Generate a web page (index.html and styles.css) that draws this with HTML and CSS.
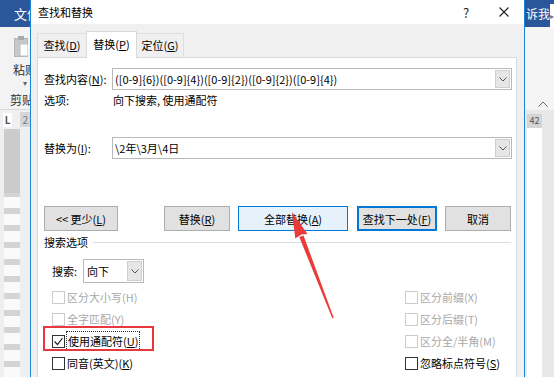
FILE: index.html
```html
<!DOCTYPE html>
<html lang="zh-CN">
<head>
  <meta charset="UTF-8" />
  <title>查找和替换</title>
  <link rel="stylesheet" href="styles.css">
</head>
<body>
  <div class="screen">
    <!-- Word window, left edge -->
    <div class="word-left">
      <div class="wl-tab">文件</div>
      <div class="wl-ribbon">
        <svg class="clip-icon" width="14" height="22" viewBox="0 0 14 22">
          <rect x="0.5" y="3.5" width="13" height="18" fill="#c9c9c9" stroke="#b5b5b5"/>
          <rect x="4" y="1" width="6" height="4" fill="#a9a9a9"/>
          <rect x="6" y="9" width="8" height="12" fill="#fff" stroke="#bdbdbd"/>
        </svg>
        <div class="wl-paste">粘贴</div>
        <div class="wl-caret">▾</div>
        <div class="wl-group">剪贴</div>
      </div>
      <div class="wl-corner"><span class="wl-l">L</span><span class="wl-num">2</span></div>
      <div class="wl-body"><div class="wl-ruler"></div></div>
    </div>

    <!-- Find and replace dialog -->
    <div class="dialog">
      <div class="titlebar">
        <span class="title">查找和替换</span>
        <span class="help">?</span>
        <svg class="close" width="10" height="10" viewBox="0 0 10 10">
          <path d="M0.5 0.5 L9.5 9.5 M9.5 0.5 L0.5 9.5" stroke="#222" stroke-width="1.1"/>
        </svg>
      </div>

      <div class="tabs">
        <div class="tab" style="width:50px">查找(<u>D</u>)</div>
        <div class="tab active" style="width:51px">替换(<u>P</u>)</div>
        <div class="tab" style="width:48px">定位(<u>G</u>)</div>
      </div>

      <div class="panel">
        <div class="field-row">
          <span>查找内容(<u>N</u>):</span>
          <div class="combo">
            <span class="combo-text">([0-9]{6})([0-9]{4})([0-9]{2})([0-9]{2})([0-9]{4})</span>
            <span class="combo-btn"><svg width="8" height="5" viewBox="0 0 8 5"><polyline points="0.5,0.5 4,4 7.5,0.5" fill="none" stroke="#555"/></svg></span>
          </div>
        </div>
        <div class="field-row options-row">
          <span>选项:</span>
          <span class="options-text">向下搜索, 使用通配符</span>
        </div>
        <div class="field-row replace-row">
          <span>替换为(<u>I</u>):</span>
          <div class="combo">
            <span class="combo-text">\2年\3月\4日</span>
            <span class="combo-btn"><svg width="8" height="5" viewBox="0 0 8 5"><polyline points="0.5,0.5 4,4 7.5,0.5" fill="none" stroke="#555"/></svg></span>
          </div>
        </div>

        <div class="buttons">
          <button class="btn btn-less">&lt;&lt; 更少(<u>L</u>)</button>
          <button class="btn btn-replace">替换(<u>R</u>)</button>
          <button class="btn btn-all">全部替换(<u>A</u>)</button>
          <button class="btn btn-next">查找下一处(<u>F</u>)</button>
          <button class="btn btn-cancel">取消</button>
        </div>

        <div class="group-title">搜索选项</div>

        <div class="search-row">
          <span class="search-label">搜索:</span>
          <div class="select">
            <span class="select-text">向下</span>
            <span class="combo-btn"><svg width="8" height="5" viewBox="0 0 8 5"><polyline points="0.5,0.5 4,4 7.5,0.5" fill="none" stroke="#555"/></svg></span>
          </div>
        </div>

        <div class="checks">
          <div class="check disabled"><span class="box"></span>区分大小写(H)</div>
          <div class="check disabled"><span class="box"></span>区分前缀(X)</div>
          <div class="check disabled"><span class="box"></span>全字匹配(Y)</div>
          <div class="check disabled"><span class="box"></span>区分后缀(T)</div>
          <div class="check"><span class="box"><svg width="11" height="11" viewBox="0 0 11 11"><polyline points="1.5,5.5 4.5,8.5 9.5,2" fill="none" stroke="#222" stroke-width="1.2"/></svg></span><span class="focus">使用通配符(<u>U</u>)</span></div>
          <div class="check disabled"><span class="box"></span>区分全/半角(M)</div>
          <div class="check"><span class="box"></span>同音(英文)(<u>K</u>)</div>
          <div class="check"><span class="box"></span>忽略标点符号(<u>S</u>)</div>
        </div>
      </div>
    </div>

    <!-- Word window, right edge -->
    <div class="word-right">
      <div class="wr-tab"><span class="wr-text">诉我</span><span class="wr-more">▸</span></div>
      <div class="wr-ribbon"><svg width="10" height="6" viewBox="0 0 10 6"><polyline points="0.5,5.5 5,1 9.5,5.5" fill="none" stroke="#666"/></svg></div>
      <div class="wr-body">
        <div class="wr-col"><span class="wr-num">42</span></div>
      </div>
    </div>

    <!-- annotations -->
    <div class="mark-box"></div>
    <svg class="arrow" width="554" height="377" viewBox="0 0 554 377">
      <polygon points="332.3,318.3 333.7,317.7 303.5,235.5 299.3,237.1" fill="#ea3a3a"/>
      <polygon points="292,212 307.5,233.9 301.4,234.6 295.3,238.6" fill="#ea3a3a"/>
    </svg>
  </div>
</body>
</html>
```

FILE: styles.css
```css
body {
  margin: 0;
  font-family: "Noto Sans CJK SC", "Microsoft YaHei", sans-serif;
  font-size: 11px;
  color: #000;
}
u {
  text-decoration-thickness: 1px;
  text-underline-offset: 1px;
}
.screen {
  position: relative;
  width: 554px;
  height: 377px;
  overflow: hidden;
  display: flex;
  background: #e6e6e6;
}

/* word window left */
.word-left {
  width: 30px;
  flex: none;
  display: flex;
  flex-direction: column;
  overflow: hidden;
}
.wl-tab {
  height: 27px;
  background: #2b579a;
  color: #fff;
  font-size: 13px;
  line-height: 27px;
  padding-left: 14px;
  white-space: nowrap;
}
.wl-ribbon {
  height: 82px;
  background: #f3f3f3;
  border-bottom: 1px solid #dadada;
  display: flex;
  flex-direction: column;
  white-space: nowrap;
  color: #333;
  font-size: 12px;
}
.clip-icon {
  margin: 8px 0 0 14px;
}
.wl-paste {
  margin: 5px 0 0 13px;
  line-height: 16px;
}
.wl-caret {
  margin: 0 0 0 23px;
  font-size: 8px;
  line-height: 10px;
  color: #666;
}
.wl-group {
  margin: 4px 0 0 10px;
  line-height: 16px;
}
.wl-corner {
  height: 19px;
  background: #f0f0f0;
  display: flex;
  align-items: center;
  white-space: nowrap;
}
.wl-l {
  width: 14px;
  margin-left: 3px;
  background: #fff;
  text-align: center;
  font-size: 10px;
  font-weight: bold;
  color: #555;
  line-height: 14px;
}
.wl-num {
  margin-left: 8px;
  font-size: 10px;
  color: #777;
  background: #d6d6d6;
  padding: 0 2px;
}
.wl-body {
  flex: 1;
  background: #efefef;
  padding-left: 4px;
}
.wl-ruler {
  width: 16px;
  height: 100%;
  background:
    linear-gradient(#cbcbcb 0 64px, transparent 64px),
    repeating-linear-gradient(#fafafa 0 11px, #d4d4d4 11px 17px);
}

/* dialog */
.dialog {
  width: 493px;
  flex: none;
  border-left: 1px solid #1883d7;
  border-right: 1px solid #1883d7;
  background: #f0f0f0;
  display: flex;
  flex-direction: column;
}
.titlebar {
  height: 24px;
  background: #fff;
  display: flex;
  align-items: center;
  padding-left: 7px;
}
.title {
  flex: 1;
}
.help {
  width: 12px;
  margin-right: 27px;
  text-align: center;
  font-size: 13px;
  color: #222;
}
.close {
  margin-right: 15px;
}
.tabs {
  display: flex;
  align-items: flex-end;
  height: 24px;
  margin-top: 9px;
  padding-left: 6px;
}
.tab {
  box-sizing: border-box;
  height: 24px;
  border: 1px solid #dedede;
  border-bottom: none;
  background: #f0f0f0;
  text-align: center;
  line-height: 23px;
  margin-right: -1px;
  white-space: nowrap;
}
.tab.active {
  height: 27px;
  margin-bottom: -1px;
  background: #fff;
  border-color: #d9d9d9;
  line-height: 25px;
  position: relative;
  z-index: 1;
}
.panel {
  flex: 1;
  background: #fff;
  border: 1px solid #d9d9d9;
  border-bottom: none;
  margin: 0 7px 0 6px;
  padding: 10px 4px 0 6px;
}
.field-row {
  display: grid;
  grid-template-columns: 68px 1fr;
  align-items: center;
  white-space: nowrap;
}
.combo {
  box-sizing: border-box;
  height: 22px;
  display: flex;
  border: 1px solid #b9b9b9;
}
.combo-text {
  flex: 1;
  padding-left: 2px;
  line-height: 20px;
  white-space: nowrap;
  overflow: hidden;
}
.combo-btn {
  box-sizing: border-box;
  width: 15px;
  margin: 1px;
  background: #e6e6e6;
  border: 1px solid #cfcfcf;
  display: flex;
  align-items: center;
  justify-content: center;
}
.options-row {
  height: 20px;
  line-height: 20px;
}
.options-text {
  padding-left: 1px;
}
.replace-row {
  margin-top: 27px;
}

.buttons {
  display: flex;
  margin-top: 47px;
}
.btn {
  box-sizing: border-box;
  height: 25px;
  padding: 0;
  font: inherit;
  color: #000;
  background: #e1e1e1;
  border: 1px solid #adadad;
  white-space: nowrap;
}
.btn-less { width: 74px; }
.btn-replace { width: 66px; margin-left: 46px; }
.btn-all {
  width: 110px;
  margin-left: 8px;
  background: #e5f1fb;
  border-color: #0078d7;
}
.btn-next {
  width: 80px;
  margin-left: 9px;
  border: 2px solid #0078d7;
}
.btn-cancel { width: 66px; margin-left: 8px; }

.group-title {
  display: flex;
  align-items: center;
  margin-top: 3px;
  height: 16px;
  line-height: 16px;
}
.group-title::after {
  content: "";
  flex: 1;
  height: 1px;
  margin: 1px 1px 0 5px;
  background: #dcdcdc;
}
.search-row {
  display: flex;
  align-items: center;
  margin-top: 9px;
  padding-left: 8px;
}
.search-label {
  width: 31px;
}
.select {
  box-sizing: border-box;
  width: 61px;
  height: 24px;
  display: flex;
  border: 1px solid #b9b9b9;
}
.select-text {
  flex: 1;
  padding-left: 3px;
  line-height: 22px;
}
.checks {
  display: grid;
  grid-template-columns: 353px 1fr;
  grid-auto-rows: 22px;
  margin-top: 3px;
  padding-left: 8px;
}
.check {
  display: flex;
  align-items: center;
  white-space: nowrap;
}
.box {
  box-sizing: border-box;
  width: 13px;
  height: 13px;
  margin-right: 2px;
  border: 1px solid #333;
  background: #fff;
  display: flex;
  align-items: center;
  justify-content: center;
}
.check.disabled {
  color: #a8a8a8;
}
.check.disabled .box {
  border-color: #cccccc;
}
.focus {
  outline: 1px dotted #333;
  outline-offset: 1px;
  margin-left: 1px;
}

/* word window right */
.word-right {
  width: 29px;
  flex: none;
  display: flex;
  flex-direction: column;
  overflow: hidden;
}
.wr-tab {
  height: 27px;
  background: #2b579a;
  display: flex;
}
.wr-text {
  flex: 1;
  color: #fff;
  font-size: 12px;
  line-height: 27px;
  padding-left: 1px;
  white-space: nowrap;
}
.wr-more {
  width: 6px;
  margin-top: 4px;
  background: #fff;
  color: #777;
  font-size: 8px;
  line-height: 23px;
  overflow: hidden;
}
.wr-ribbon {
  height: 83px;
  background: #f5f5f5;
  display: flex;
  justify-content: flex-end;
  align-items: flex-end;
  padding: 0 6px 3px 0;
  box-sizing: border-box;
}
.wr-body {
  flex: 1;
  background: #e8e8e8;
  padding: 4px 0 0 2px;
}
.wr-col {
  width: 15px;
  height: 100%;
  background: #fff;
}
.wr-num {
  display: block;
  height: 14px;
  background: #d4d4d4;
  color: #555;
  font-size: 9px;
  line-height: 14px;
  text-align: center;
}

/* annotations */
.mark-box {
  position: absolute;
  left: 43px;
  top: 326px;
  width: 111px;
  height: 25px;
  box-sizing: border-box;
  border: 2px solid #e8383d;
}
.arrow {
  position: absolute;
  left: 0;
  top: 0;
  pointer-events: none;
}
```
